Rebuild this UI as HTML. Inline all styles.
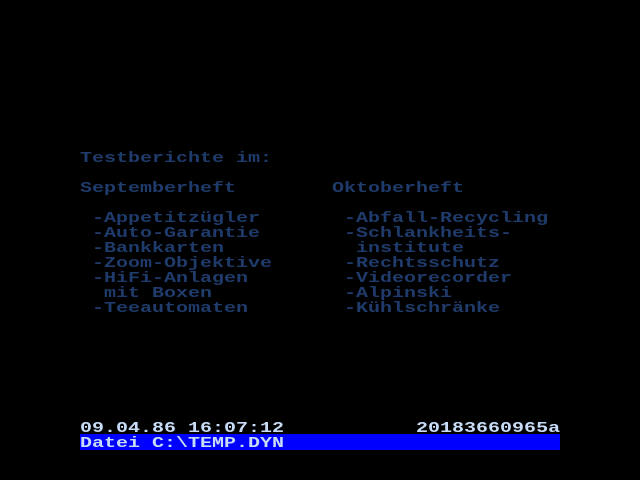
<!DOCTYPE html>
<html><head><meta charset="utf-8"><style>
html,body{margin:0;padding:0;background:#000;width:640px;height:480px;overflow:hidden}
pre{position:absolute;left:80px;margin:0;font-family:"Liberation Mono",monospace;font-size:15px;line-height:15px;font-weight:bold;white-space:pre;transform:scaleX(1.3333);transform-origin:0 0}
.d{color:#1f3b6b}
.w{color:#c8dcf8}
.bar{position:absolute;left:80px;top:434px;width:480px;height:16px;background:#0000ff}
</style></head><body>
<pre class="d" style="top:151px">Testberichte im:

Septemberheft        Oktoberheft

 -Appetitzügler       -Abfall-Recycling
 -Auto-Garantie       -Schlankheits-
 -Bankkarten           institute
 -Zoom-Objektive      -Rechtsschutz
 -HiFi-Anlagen        -Videorecorder
  mit Boxen           -Alpinski
 -Teeautomaten        -Kühlschränke</pre>
<pre class="w" style="top:421px">09.04.86 16:07:12           20183660965a</pre>
<div class="bar"></div>
<pre class="w" style="top:436px">Datei C:\TEMP.DYN</pre>
</body></html>
